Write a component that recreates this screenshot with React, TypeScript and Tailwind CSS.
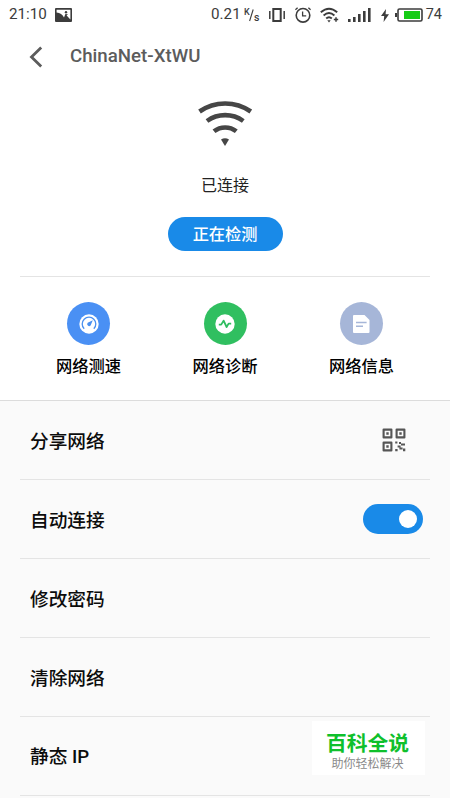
import { useState } from 'react';

const font = "font-[Roboto,'Noto_Sans_CJK_SC',sans-serif]";

function StatusBar() {
  return (
    <div className="flex h-[29px] shrink-0 items-center pl-[9px] pr-[8px] pt-px text-[#3c3c3c]">
      <span className="w-[46px] text-[15.2px] leading-none">21:10</span>
      <svg width="17" height="14" viewBox="0 0 17 14">
        <rect width="17" height="14" rx="1" fill="currentColor" />
        <path d="M1.6 1.8H15.4V11.6L11.6 7.6 13 6.2 10.4 6 9 9.4C7.6 6.8 5 5 1.6 4.6Z" fill="#fff" />
        <circle cx="11" cy="4.2" r="1.2" fill="currentColor" />
      </svg>
      <div className="ml-auto flex items-center">
        <span className="text-[15.2px] leading-none">0.21</span>
        {/* network speed unit */}
        <svg className="ml-[3px]" width="17" height="16" viewBox="0 0 17 16" fill="currentColor">
          <text x="0" y="8" fontSize="9" fontWeight="500">K</text>
          <text x="10" y="14" fontSize="10.5" fontWeight="500">s</text>
          <path d="M9.2 2.5 5.6 14" stroke="currentColor" strokeWidth="1.1" />
        </svg>
        {/* vibrate */}
        <svg className="ml-[8px]" width="16" height="14" viewBox="0 0 16 14" fill="none" stroke="currentColor">
          <rect x="4.3" y="1" width="7.4" height="12" strokeWidth="2" />
          <path d="M.8 3V11M15.2 3V11" strokeWidth="1.5" />
        </svg>
        {/* alarm */}
        <svg className="ml-[10px]" width="16" height="16" viewBox="0 0 16 16" fill="none" stroke="currentColor" strokeWidth="1.6">
          <circle cx="8" cy="8.3" r="6.8" />
          <path d="M7.6 4.6V8.8H11.2M.4 2.8 2.6.8M15.6 2.8 13.4.8" strokeWidth="1.3" />
        </svg>
        {/* wifi */}
        <svg className="ml-[9px]" width="19" height="16" viewBox="0 0 19 16" fill="none" stroke="currentColor" strokeWidth="1.9">
          <path d="M.8 5.3Q9 -1.8 17.2 5.3M3.6 8.5Q9 3.7 14.4 8.5M6.2 11.5Q9 8.8 11.8 11.5" />
          <path d="M7.3 13.2H10.7L9 15.5Z" fill="currentColor" stroke="none" />
          <path d="M16 10.2V14.8M13.8 12.5H18.2" strokeWidth="1.5" />
        </svg>
        {/* cell signal */}
        <svg className="ml-[9px]" width="23" height="14" viewBox="0 0 23 14" fill="currentColor">
          <path d="M0 11H2.6V14H0ZM5 9H7.6V14H5ZM10 6H12.6V14H10ZM15 3H17.6V14H15ZM20 0H22.6V14H20Z" />
        </svg>
        <svg className="ml-[10px]" width="8" height="13" viewBox="0 0 8 13" fill="currentColor">
          <path d="M5 0 0 7H3.2L2.6 13 8 5.3H4.6Z" />
        </svg>
        {/* battery */}
        <svg className="ml-[6px]" width="28" height="14" viewBox="0 0 28 14" fill="none">
          <rect x="3" y="1" width="24" height="12" rx="1.5" stroke="currentColor" strokeWidth="1.6" />
          <path d="M0 5H2V9H0Z" fill="currentColor" />
          <rect x="9" y="3" width="16" height="8" fill="#15cb15" />
        </svg>
        <span className="ml-[3px] text-[14.5px] leading-none">74</span>
      </div>
    </div>
  );
}

function SpeedIcon() {
  return (
    <svg width="20" height="20" viewBox="0 0 20 20" fill="none">
      <circle cx="10" cy="10" r="9.7" fill="#fff" />
      <path d="M5.2 14.8A6.8 6.8 0 1 1 14.8 14.8" stroke="#4a90f0" strokeWidth="1.3" />
      <path d="M13.8 6.2 11.6 11.4A1.9 1.9 0 1 1 8.7 8.8Z" fill="#4a90f0" />
    </svg>
  );
}

function DiagnoseIcon() {
  return (
    <svg width="20" height="20" viewBox="0 0 20 20" fill="none">
      <circle cx="10" cy="10" r="9.7" fill="#fff" />
      <path d="M3.8 10.6H6.2L8.6 6.6 11.6 13 13.6 9.6H16.2" stroke="#2fbd60" strokeWidth="1.8" strokeLinejoin="round" />
    </svg>
  );
}

function InfoIcon() {
  return (
    <svg width="17" height="18" viewBox="0 0 17 18" fill="none">
      <path d="M1 0H11.5L16.5 5V17Q16.5 18 15.5 18H1Q0 18 0 17V1Q0 0 1 0Z" fill="#fff" />
      <path d="M3 7.6H13.6M3 11.2H10" stroke="#a6b6d8" strokeWidth="1.5" />
    </svg>
  );
}

function QrIcon() {
  return (
    <svg width="24" height="24" viewBox="0 0 24 24" fill="none" stroke="#555">
      <path d="M1.6 1.6H9.4V9.4H1.6ZM14.6 1.6H22.4V9.4H14.6ZM1.6 14.6H9.4V22.4H1.6Z" strokeWidth="2.1" strokeLinejoin="round" />
      <path d="M4.3 4.3H6.7V6.7H4.3ZM17.3 4.3H19.7V6.7H17.3ZM4.3 17.3H6.7V19.7H4.3ZM13.2 13.6H15.4V15.6H13.2ZM17 14H19V16H17ZM19 15.6H23V17.6H19ZM15.6 17.4H18.6V19.4H15.6ZM13.2 21H15.6V23.2H13.2ZM17.4 19.6H20.6V21.6H17.4ZM21 20.4H23.3V23.2H21Z" fill="#555" stroke="none" />
    </svg>
  );
}

const actions = [
  { label: '网络测速', color: 'bg-[#4a90f4]', icon: SpeedIcon },
  { label: '网络诊断', color: 'bg-[#30bf60]', icon: DiagnoseIcon },
  { label: '网络信息', color: 'bg-[#a6b6d8]', icon: InfoIcon },
];

export default function App() {
  const [autoConnect, setAutoConnect] = useState(true);

  const rows = [
    { label: '分享网络', right: <span className="mr-[24px]"><QrIcon /></span> },
    {
      label: '自动连接',
      right: (
        <button
          onClick={() => setAutoConnect(!autoConnect)}
          className={`mb-px mr-[7px] flex h-[30px] w-[60px] items-center rounded-full px-[6px] ${
            autoConnect ? 'justify-end bg-[#198ae8]' : 'justify-start bg-gray-300'
          }`}
        >
          <span className="h-[18px] w-[18px] rounded-full bg-white" />
        </button>
      ),
    },
    { label: '修改密码' },
    { label: '清除网络' },
    { label: '静态 IP' },
  ];

  return (
    <div className={`relative flex h-[800px] w-[450px] flex-col overflow-hidden bg-white ${font}`}>
      <StatusBar />

      <header className="flex h-[55px] shrink-0 items-center pl-[29px] text-[#5c5c5c]">
        <svg width="14" height="22" viewBox="0 0 14 22" fill="none" stroke="currentColor" strokeWidth="2.8">
          <path d="M12.2 1.5 2.5 11 12.2 20.5" />
        </svg>
        <h1 className="ml-[27px] text-[18.7px] font-medium leading-none">ChinaNet-XtWU</h1>
      </header>

      {/* connection state */}
      <section className="mx-5 flex h-[193px] shrink-0 flex-col items-center border-b border-[#e4e4e4] pt-4">
        <svg width="56" height="48" viewBox="197 100 56 48" fill="none" stroke="#464646" strokeWidth="4.6">
          <path d="M199.5 111.5A45 45 0 0 1 250.8 111.5M207 121A31 31 0 0 1 243.3 121M214 131.3A18 18 0 0 1 236.3 131.3" />
          <path d="M221 139.5Q225 137 229 139.5L225 146Z" fill="#464646" stroke="none" />
        </svg>
        <p className="mt-[26px] text-[16px] leading-6 text-[#222]">已连接</p>
        <button className="mt-[19px] h-[34px] w-[115px] rounded-full bg-[#198ae8] pt-0.5 text-[16.2px] font-medium leading-none text-white">
          正在检测
        </button>
      </section>

      <section className="flex h-[124px] shrink-0 justify-between border-b border-[#dcdcdc] px-14 pt-[25px]">
        {actions.map(a => (
          <div key={a.label} className="flex w-[65px] flex-col items-center">
            <span className={`flex h-[43px] w-[43px] items-center justify-center rounded-full ${a.color}`}>
              <a.icon />
            </span>
            <span className="mt-[10px] whitespace-nowrap text-[16.3px] font-medium leading-6 text-black">{a.label}</span>
          </div>
        ))}
      </section>

      <section className="h-[397px] shrink-0 bg-[#fafafa] px-5 pt-[0.6px]">
        {rows.map(row => (
          <div key={row.label} className="flex h-[78.8px] items-center justify-between border-b border-[#e4e4e4] pl-[10px]">
            <span className="pt-[4px] text-[18.7px] font-medium leading-none text-[#0c0c0c]">{row.label}</span>
            {row.right}
          </div>
        ))}
      </section>

      {/* corner badge */}
      <div className="absolute left-[312px] top-[721px] flex h-[54px] w-[113px] flex-col items-center bg-white pr-[2px] pt-[11px]">
        <span className="whitespace-nowrap text-[20.8px] font-bold leading-6 text-[#0fc02c]">百科全说</span>
        <span className="whitespace-nowrap text-[12px] leading-4 text-[#8a8a8a]">助你轻松解决</span>
      </div>
    </div>
  );
}
